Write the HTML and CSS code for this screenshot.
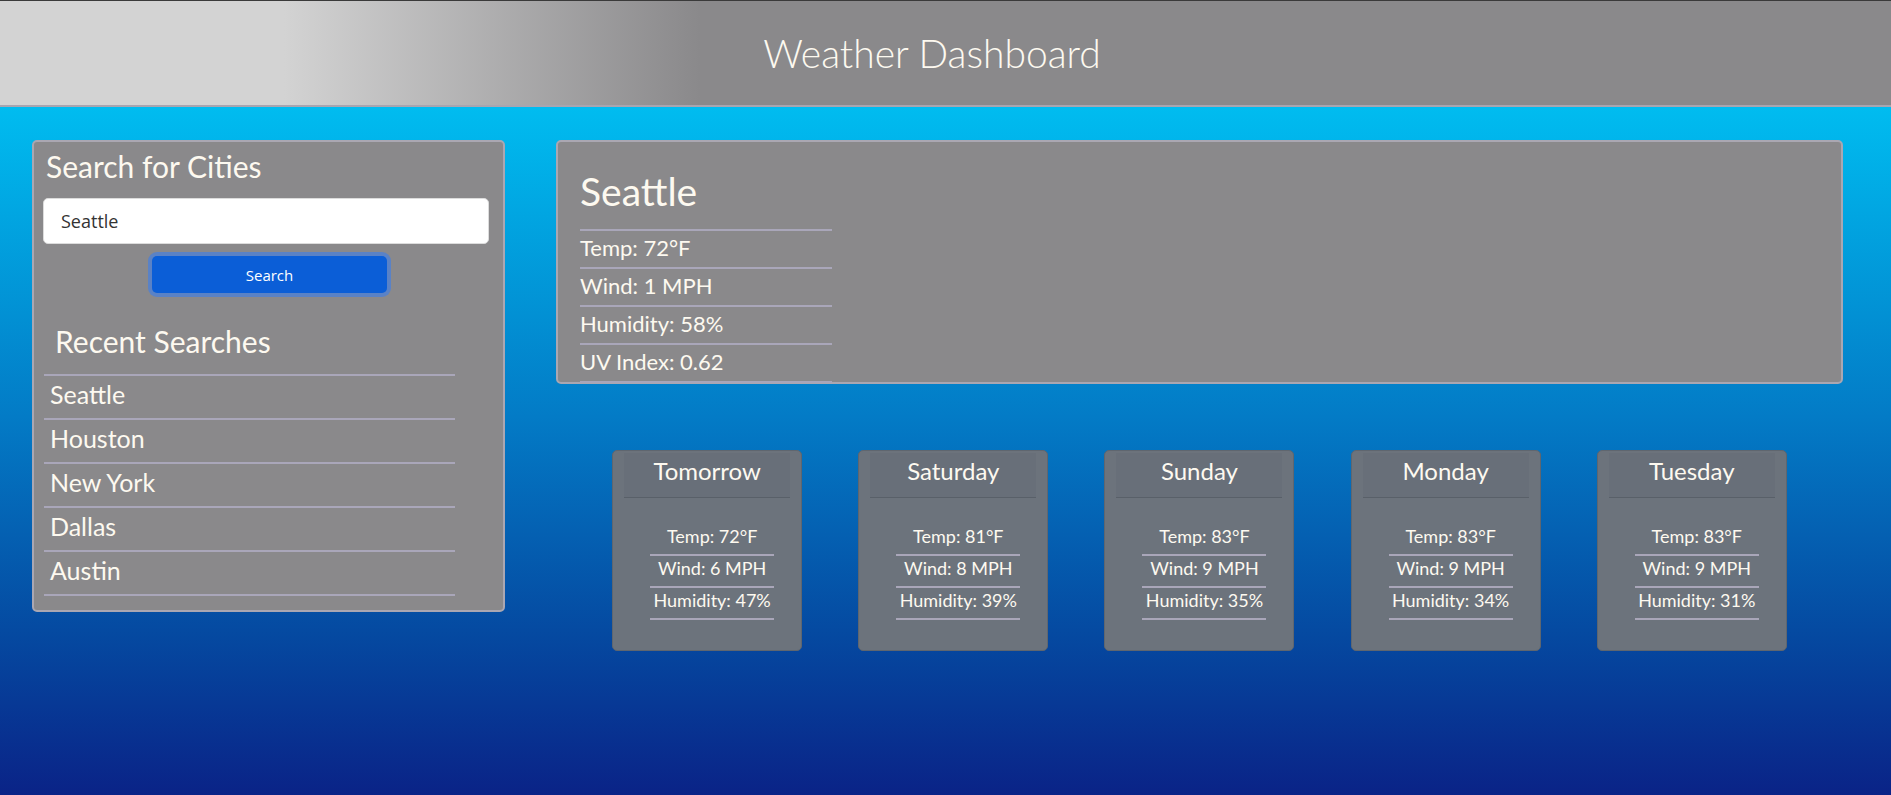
FILE: index.html
```html
<!DOCTYPE html>
<html lang="en">
<head>
<meta charset="utf-8">
<title>Weather Dashboard</title>
<link rel="stylesheet" href="styles.css">
</head>
<body>
<header class="site-header">
  <h1 class="site-title">Weather Dashboard</h1>
</header>
<main class="layout">
  <aside class="search-panel">
    <h2 class="panel-title">Search for Cities</h2>
    <input class="search-input" type="text" value="Seattle">
    <div class="btn-row"><button class="search-btn" type="button">Search</button></div>
    <h3 class="recent-title">Recent Searches</h3>
    <ul class="recent-list">
      <li>Seattle</li>
      <li>Houston</li>
      <li>New York</li>
      <li>Dallas</li>
      <li>Austin</li>
    </ul>
  </aside>
  <section class="content">
    <div class="current-panel">
      <h2 class="city-name">Seattle</h2>
      <ul class="stats">
        <li>Temp: 72°F</li>
        <li>Wind: 1 MPH</li>
        <li>Humidity: 58%</li>
        <li>UV Index: 0.62</li>
      </ul>
    </div>
    <div class="forecast">
      <div class="day-card">
        <div class="day-header">Tomorrow</div>
        <ul class="day-stats"><li>Temp: 72°F</li><li>Wind: 6 MPH</li><li>Humidity: 47%</li></ul>
      </div>
      <div class="day-card">
        <div class="day-header">Saturday</div>
        <ul class="day-stats"><li>Temp: 81°F</li><li>Wind: 8 MPH</li><li>Humidity: 39%</li></ul>
      </div>
      <div class="day-card">
        <div class="day-header">Sunday</div>
        <ul class="day-stats"><li>Temp: 83°F</li><li>Wind: 9 MPH</li><li>Humidity: 35%</li></ul>
      </div>
      <div class="day-card">
        <div class="day-header">Monday</div>
        <ul class="day-stats"><li>Temp: 83°F</li><li>Wind: 9 MPH</li><li>Humidity: 34%</li></ul>
      </div>
      <div class="day-card">
        <div class="day-header">Tuesday</div>
        <ul class="day-stats"><li>Temp: 83°F</li><li>Wind: 9 MPH</li><li>Humidity: 31%</li></ul>
      </div>
    </div>
  </section>
</main>
</body>
</html>
```
FILE: styles.css
```css
* { box-sizing: border-box; }

html, body {
  margin: 0;
  padding: 0;
}

body {
  font-family: "Lato", "Noto Sans", sans-serif;
  font-weight: 400;
  color: #fdf9f0;
  height: 795px;
  overflow: hidden;
  display: flex;
  flex-direction: column;
  background: #0a2387;
}

.site-header {
  height: 107px;
  flex: none;
  border-top: 1px solid #3a3a3a;
  border-bottom: 2px solid #a8a5b0;
  background: linear-gradient(to right, #d3d3d3 0%, #d3d3d3 15%, #8a898b 37%, #8a898b 100%);
  display: flex;
  align-items: center;
  justify-content: center;
  padding-right: 27px;
}

.site-title {
  margin: 0;
  font-size: 39px;
  font-weight: 300;
  line-height: 48px;
  color: #fdf9f0;
}

.layout {
  flex: 1;
  display: flex;
  align-items: flex-start;
  gap: 51px;
  padding: 33px 48px 0 32px;
  background: linear-gradient(to bottom, #00bcf0 0%, #037bc6 45%, #05479f 78%, #0a2387 100%);
}

.search-panel {
  width: 473px;
  flex: none;
  background: #8a898b;
  border: 2px solid #aaa7b2;
  border-radius: 5px;
  padding: 6px 9px 14px;
}

.panel-title {
  margin: 0 0 14px 3px;
  font-size: 30px;
  font-weight: 400;
  line-height: 36px;
}

.search-input {
  display: block;
  width: 446px;
  height: 46px;
  border: 1px solid #dcdcdc;
  border-radius: 5px;
  background: #fff;
  padding: 0 17px;
  font-family: "Open Sans", "Noto Sans", sans-serif;
  font-size: 18px;
  color: #333;
  outline: none;
}

.btn-row {
  display: flex;
  justify-content: center;
  margin-top: 12px;
}

.search-btn {
  width: 235px;
  height: 37px;
  border: none;
  border-radius: 5px;
  background: #0b5ed7;
  box-shadow: 0 0 0 4px #5a82c6;
  color: #fff;
  font-family: "Open Sans", "Noto Sans", sans-serif;
  font-size: 15px;
  margin-left: 2px;
}

.recent-title {
  margin: 30px 0 15px 12px;
  font-size: 30px;
  font-weight: 400;
  line-height: 36px;
}

.recent-list {
  list-style: none;
  margin: 0;
  padding: 0;
  width: 411px;
  margin-left: 1px;
  border-bottom: 2px solid #a9a6b9;
}

.recent-list li {
  border-top: 2px solid #a9a6b9;
  font-size: 25px;
  line-height: 36px;
  padding: 0 0 6px 6px;
}

.content {
  width: 1287px;
  flex: none;
}

.current-panel {
  height: 244px;
  background: #8a898b;
  border: 2px solid #aaa7b2;
  border-radius: 5px;
  padding: 25px 22px 0;
}

.city-name {
  margin: 0 0 14px;
  font-size: 39px;
  font-weight: 400;
  line-height: 48px;
}

.stats {
  list-style: none;
  margin: 0;
  padding: 0;
  width: 252px;
  border-bottom: 2px solid #a9a6b9;
}

.stats li {
  border-top: 2px solid #a9a6b9;
  font-size: 22px;
  line-height: 34px;
  padding-bottom: 2px;
}

.forecast {
  display: flex;
  justify-content: space-evenly;
  margin-top: 66px;
}

.day-card {
  width: 190px;
  height: 201px;
  background: #6c737c;
  border: 1px solid #5f666f;
  border-radius: 5px;
  padding: 2px 11px 0;
}

.day-header {
  background: rgba(33, 37, 41, 0.04);
  border-bottom: 1px solid #596069;
  text-align: center;
  font-size: 24px;
  line-height: 36px;
  padding-bottom: 8px;
}

.day-stats {
  list-style: none;
  margin: 0 auto;
  padding: 26px 0 0 10px;
  width: 134px;
  text-align: center;
}

.day-stats li {
  font-size: 18px;
  line-height: 24px;
  padding-bottom: 6px;
  border-bottom: 2px solid #a9a6b9;
}
```
